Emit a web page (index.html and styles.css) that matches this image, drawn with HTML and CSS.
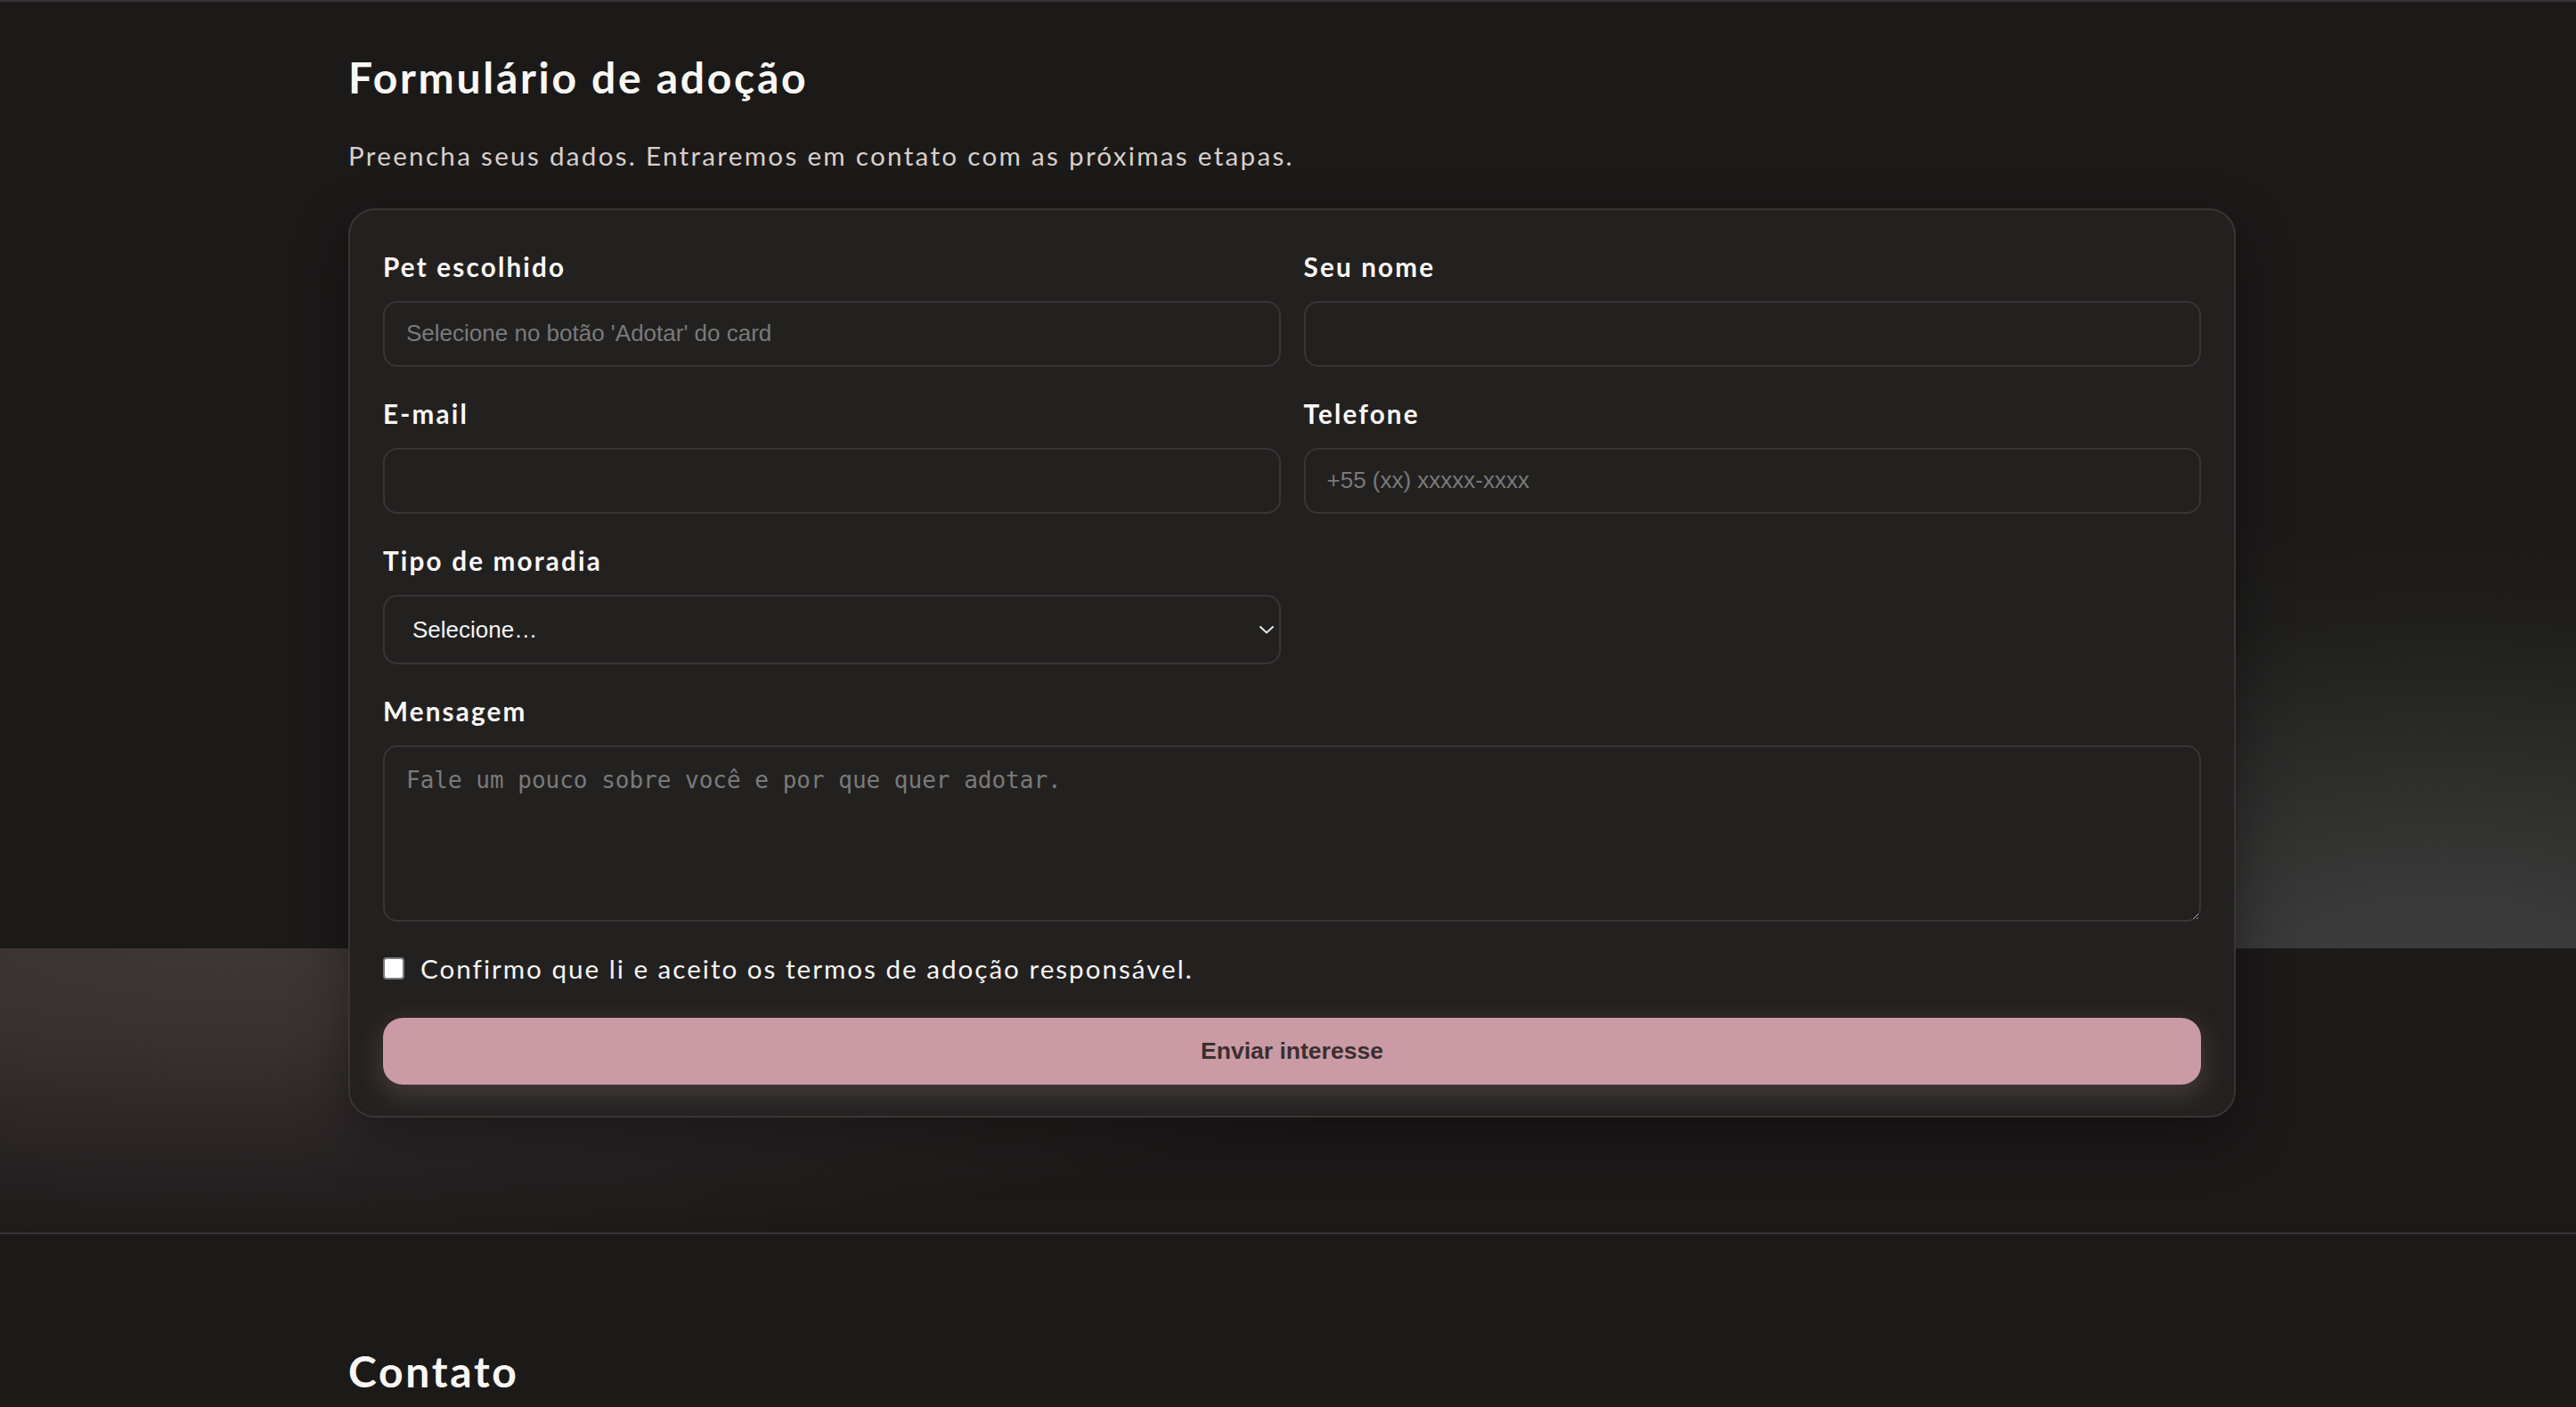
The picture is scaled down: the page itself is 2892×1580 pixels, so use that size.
FILE: index.html
```html
<!DOCTYPE html>
<html lang="pt-BR">
<head>
<meta charset="utf-8">
<title>Formulário de adoção</title>
<link rel="stylesheet" href="styles.css">
</head>
<body>
<section class="adopt">
  <div class="container">
    <h2 class="title">Formulário de adoção</h2>
    <p class="lead">Preencha seus dados. Entraremos em contato com as próximas etapas.</p>
    <form class="card" onsubmit="return false">
      <div class="field">
        <label class="label" for="pet">Pet escolhido</label>
        <input class="control" id="pet" type="text" placeholder="Selecione no botão 'Adotar' do card" readonly>
      </div>
      <div class="field">
        <label class="label" for="nome">Seu nome</label>
        <input class="control" id="nome" type="text">
      </div>
      <div class="field">
        <label class="label" for="email">E-mail</label>
        <input class="control" id="email" type="email">
      </div>
      <div class="field">
        <label class="label" for="tel">Telefone</label>
        <input class="control" id="tel" type="tel" placeholder="+55 (xx) xxxxx-xxxx">
      </div>
      <div class="field">
        <label class="label" for="moradia">Tipo de moradia</label>
        <div class="select-wrap">
          <select class="control select" id="moradia">
            <option>Selecione…</option>
            <option>Casa</option>
            <option>Apartamento</option>
          </select>
          <svg class="chev" width="18" height="10" viewBox="0 0 18 10" aria-hidden="true"><polyline points="1.5,1.5 9,8.5 16.5,1.5" fill="none" stroke="#ececec" stroke-width="2"/></svg>
        </div>
      </div>
      <div class="field wide">
        <label class="label" for="msg">Mensagem</label>
        <textarea class="control area" id="msg" placeholder="Fale um pouco sobre você e por que quer adotar."></textarea>
      </div>
      <label class="check wide"><input class="box" type="checkbox"><span>Confirmo que li e aceito os termos de adoção responsável.</span></label>
      <button class="submit wide" type="submit">Enviar interesse</button>
    </form>
  </div>
</section>
<section class="contact">
  <div class="container">
    <h2 class="title">Contato</h2>
  </div>
</section>
</body>
</html>
```

FILE: styles.css
```css
* { box-sizing: border-box; }

html, body {
  margin: 0;
  background: #1c1a19;
  color: #f7f3f0;
  font-family: "Lato", "Noto Sans", sans-serif;
}

.container {
  width: 2119px;
  margin-left: 391px;
}

.adopt {
  border-top: 2px solid #3a3436;
  border-bottom: 2px solid #3a3436;
  padding: 55.6px 0 129.4px;
  background-color: #1c1a19;
  background-image:
    radial-gradient(ellipse 1000px 540px at 2740px 1118px, #3b3c3b 0%, #393a39 20%, #343533 32%, #2a2a29 54%, #1f1e1d 80%, #1c1a19 100%),
    radial-gradient(ellipse 1500px 340px at 250px 0px, #3f3637 0%, #393031 30%, #2e2728 56%, #221e1e 85%, #1c1a19 100%);
  background-size: 100% 1063px, 100% 320px;
  background-position: 0 0, 0 1063px;
  background-repeat: no-repeat;
}

.title {
  margin: 0;
  font-size: 48px;
  line-height: 1.2;
  font-weight: 700;
  letter-spacing: 2.7px;
  color: #fbf8f5;
}

.lead {
  margin: 38px 0 36px;
  font-size: 29.6px;
  line-height: 44.4px;
  letter-spacing: 2.3px;
  color: #d8cfcb;
}

.card {
  display: grid;
  grid-template-columns: 1fr 1fr;
  column-gap: 26px;
  row-gap: 35px;
  padding: 46px 37px 35px;
  background: #232120;
  border: 2px solid #3a3435;
  border-radius: 30px;
  box-shadow: 0 22px 60px rgba(0, 0, 0, 0.35);
}

.field {
  display: flex;
  flex-direction: column;
}

.wide { grid-column: 1 / -1; }

.label {
  font-size: 29.6px;
  line-height: 36px;
  font-weight: 700;
  letter-spacing: 2.2px;
  color: #fdfaf8;
  margin-bottom: 20px;
}

.control {
  width: 100%;
  height: 74px;
  padding: 0 24px;
  background: #222120;
  border: 2px solid #3a3435;
  border-radius: 16px;
  color: #eeeeee;
  font-family: "Liberation Sans", Arial, sans-serif;
  font-size: 26px;
  outline: none;
}

.control::placeholder { color: #7a7a7a; }

.select-wrap { position: relative; }

.select {
  appearance: none;
  -webkit-appearance: none;
  height: 78px;
  padding: 0 31px;
  color: #f4f4f4;
}

.chev {
  position: absolute;
  right: 7px;
  top: 50%;
  transform: translateY(-50%);
  pointer-events: none;
}

.area {
  display: block;
  height: 198px;
  padding: 22px 24px;
  font-family: "DejaVu Sans Mono", "Liberation Mono", monospace;
  font-size: 26px;
  resize: vertical;
}

.check {
  display: flex;
  align-items: center;
  gap: 18px;
  font-size: 29.6px;
  line-height: 36px;
  letter-spacing: 2px;
  color: #f7f4f2;
}

.box {
  appearance: none;
  -webkit-appearance: none;
  margin: 0;
  width: 24px;
  height: 25px;
  flex: none;
  background: #ffffff;
  border: 2px solid #7a7a7a;
  border-radius: 4px;
}

.submit {
  margin-top: 2px;
  height: 75px;
  border: 0;
  border-radius: 22px;
  background: #ca9ba5;
  color: #3a2f31;
  font-family: "Liberation Sans", Arial, sans-serif;
  font-size: 26.5px;
  font-weight: 700;
  box-shadow: 0 10px 32px rgba(201, 155, 164, 0.24);
  cursor: pointer;
}

.contact {
  padding: 124.6px 0 100px;
}
```
